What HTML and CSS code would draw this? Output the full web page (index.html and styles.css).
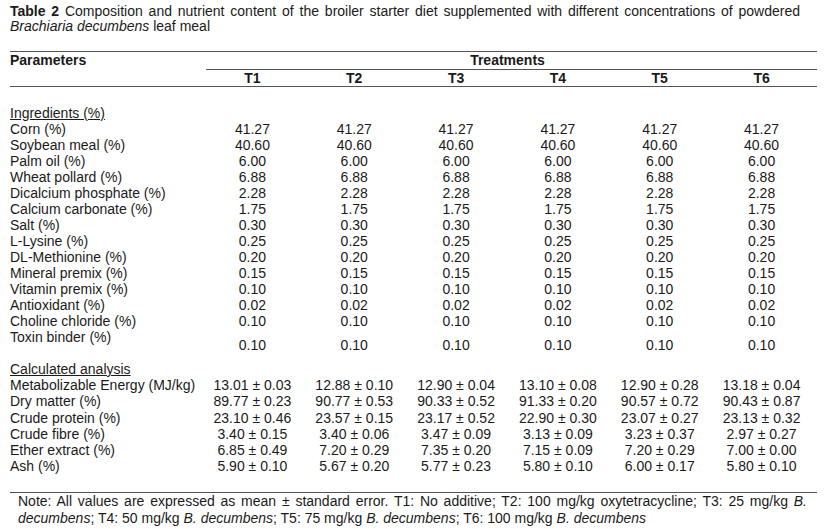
FILE: index.html
```html
<!DOCTYPE html>
<html>
<head>
<meta charset="utf-8">
<link rel="stylesheet" href="styles.css">
</head>
<body>
<div class="page">
  <p class="caption"><b>Table 2</b> Composition and nutrient content of the broiler starter diet supplemented with different concentrations of powdered <i>Brachiaria decumbens</i> leaf meal</p>
  <table class="data">
    <colgroup>
      <col class="c-param">
      <col class="c-val"><col class="c-val"><col class="c-val"><col class="c-val"><col class="c-val"><col class="c-val">
    </colgroup>
    <thead>
      <tr class="h1">
        <th class="param" rowspan="2">Parameters</th>
        <th class="treat" colspan="6">Treatments</th>
      </tr>
      <tr class="h2">
        <th>T1</th><th>T2</th><th>T3</th><th>T4</th><th>T5</th><th>T6</th>
      </tr>
    </thead>
    <tbody>
      <tr class="section first"><td class="label"><u>Ingredients (%)</u></td><td></td><td></td><td></td><td></td><td></td><td></td></tr>
      <tr><td class="label">Corn (%)</td><td>41.27</td><td>41.27</td><td>41.27</td><td>41.27</td><td>41.27</td><td>41.27</td></tr>
      <tr><td class="label">Soybean meal (%)</td><td>40.60</td><td>40.60</td><td>40.60</td><td>40.60</td><td>40.60</td><td>40.60</td></tr>
      <tr><td class="label">Palm oil (%)</td><td>6.00</td><td>6.00</td><td>6.00</td><td>6.00</td><td>6.00</td><td>6.00</td></tr>
      <tr><td class="label">Wheat pollard (%)</td><td>6.88</td><td>6.88</td><td>6.88</td><td>6.88</td><td>6.88</td><td>6.88</td></tr>
      <tr><td class="label">Dicalcium phosphate (%)</td><td>2.28</td><td>2.28</td><td>2.28</td><td>2.28</td><td>2.28</td><td>2.28</td></tr>
      <tr><td class="label">Calcium carbonate (%)</td><td>1.75</td><td>1.75</td><td>1.75</td><td>1.75</td><td>1.75</td><td>1.75</td></tr>
      <tr><td class="label">Salt (%)</td><td>0.30</td><td>0.30</td><td>0.30</td><td>0.30</td><td>0.30</td><td>0.30</td></tr>
      <tr><td class="label">L-Lysine (%)</td><td>0.25</td><td>0.25</td><td>0.25</td><td>0.25</td><td>0.25</td><td>0.25</td></tr>
      <tr><td class="label">DL-Methionine (%)</td><td>0.20</td><td>0.20</td><td>0.20</td><td>0.20</td><td>0.20</td><td>0.20</td></tr>
      <tr><td class="label">Mineral premix (%)</td><td>0.15</td><td>0.15</td><td>0.15</td><td>0.15</td><td>0.15</td><td>0.15</td></tr>
      <tr><td class="label">Vitamin premix (%)</td><td>0.10</td><td>0.10</td><td>0.10</td><td>0.10</td><td>0.10</td><td>0.10</td></tr>
      <tr><td class="label">Antioxidant (%)</td><td>0.02</td><td>0.02</td><td>0.02</td><td>0.02</td><td>0.02</td><td>0.02</td></tr>
      <tr><td class="label">Choline chloride (%)</td><td>0.10</td><td>0.10</td><td>0.10</td><td>0.10</td><td>0.10</td><td>0.10</td></tr>
      <tr class="tall"><td class="label">Toxin binder (%)</td><td>0.10</td><td>0.10</td><td>0.10</td><td>0.10</td><td>0.10</td><td>0.10</td></tr>
      <tr class="section"><td class="label"><u>Calculated analysis</u></td><td></td><td></td><td></td><td></td><td></td><td></td></tr>
      <tr class="calc"><td class="label">Metabolizable Energy (MJ/kg)</td><td>13.01 ± 0.03</td><td>12.88 ± 0.10</td><td>12.90 ± 0.04</td><td>13.10 ± 0.08</td><td>12.90 ± 0.28</td><td>13.18 ± 0.04</td></tr>
      <tr class="calc"><td class="label">Dry matter (%)</td><td>89.77 ± 0.23</td><td>90.77 ± 0.53</td><td>90.33 ± 0.52</td><td>91.33 ± 0.20</td><td>90.57 ± 0.72</td><td>90.43 ± 0.87</td></tr>
      <tr class="calc"><td class="label">Crude protein (%)</td><td>23.10 ± 0.46</td><td>23.57 ± 0.15</td><td>23.17 ± 0.52</td><td>22.90 ± 0.30</td><td>23.07 ± 0.27</td><td>23.13 ± 0.32</td></tr>
      <tr class="calc"><td class="label">Crude fibre (%)</td><td>3.40 ± 0.15</td><td>3.40 ± 0.06</td><td>3.47 ± 0.09</td><td>3.13 ± 0.09</td><td>3.23 ± 0.37</td><td>2.97 ± 0.27</td></tr>
      <tr class="calc"><td class="label">Ether extract (%)</td><td>6.85 ± 0.49</td><td>7.20 ± 0.29</td><td>7.35 ± 0.20</td><td>7.15 ± 0.09</td><td>7.20 ± 0.29</td><td>7.00 ± 0.00</td></tr>
      <tr class="calc"><td class="label">Ash (%)</td><td>5.90 ± 0.10</td><td>5.67 ± 0.20</td><td>5.77 ± 0.23</td><td>5.80 ± 0.10</td><td>6.00 ± 0.17</td><td>5.80 ± 0.10</td></tr>
    </tbody>
  </table>
  <p class="note">Note: All values are expressed as mean ± standard error. T1: No additive; T2: 100 mg/kg oxytetracycline; T3: 25 mg/kg <i>B. decumbens</i>; T4: 50 mg/kg <i>B. decumbens</i>; T5: 75 mg/kg <i>B. decumbens</i>; T6: 100 mg/kg <i>B. decumbens</i></p>
</div>
</body>
</html>
```

FILE: styles.css
```css
html, body {
  margin: 0;
  padding: 0;
  background: #ffffff;
}
body {
  font-family: "Liberation Sans", Arial, sans-serif;
  color: #1a1a1a;
}
.page {
  padding: 4px 7px 0 10px;
  width: 807px;
}
.caption {
  margin: 0;
  width: 790px;
  font-size: 14px;
  line-height: 15px;
  text-align: justify;
}
.caption b {
  font-weight: bold;
}
.data {
  margin-top: 17px;
  width: 807px;
  border-collapse: collapse;
  border-spacing: 0;
  table-layout: fixed;
  font-size: 14px;
}
.c-param {
  width: 196px;
}
.data th,
.data td {
  padding: 0;
}
.data thead tr.h1 th {
  border-top: 1px solid #555;
  height: 17px;
  line-height: 17px;
}
.data thead tr.h2 th {
  border-bottom: 1px solid #555;
  height: 16px;
  line-height: 16px;
  text-align: center;
  padding-right: 9px;
}
.data th.param {
  text-align: left;
  vertical-align: top;
  border-bottom: 1px solid #555;
}
.data th.treat {
  text-align: center;
  padding-right: 8px;
  border-bottom: 1px solid #555;
}
.data td {
  height: 16px;
  line-height: 16px;
  text-align: center;
  padding-right: 9px;
  white-space: nowrap;
}
.data td.label {
  text-align: left;
  padding-right: 0;
}
.data tr.first td {
  padding-top: 18px;
}
.data tr.tall td {
  height: 32px;
  vertical-align: middle;
}
.data tr.tall td.label {
  vertical-align: top;
}
.data tr.calc td {
  height: 16.3px;
  line-height: 16.3px;
}
.note {
  margin: 17px 0 0;
  border-top: 1px solid #555;
  padding: 0 10px 0 8px;
  font-size: 14px;
  line-height: 17px;
  text-align: justify;
}
```
